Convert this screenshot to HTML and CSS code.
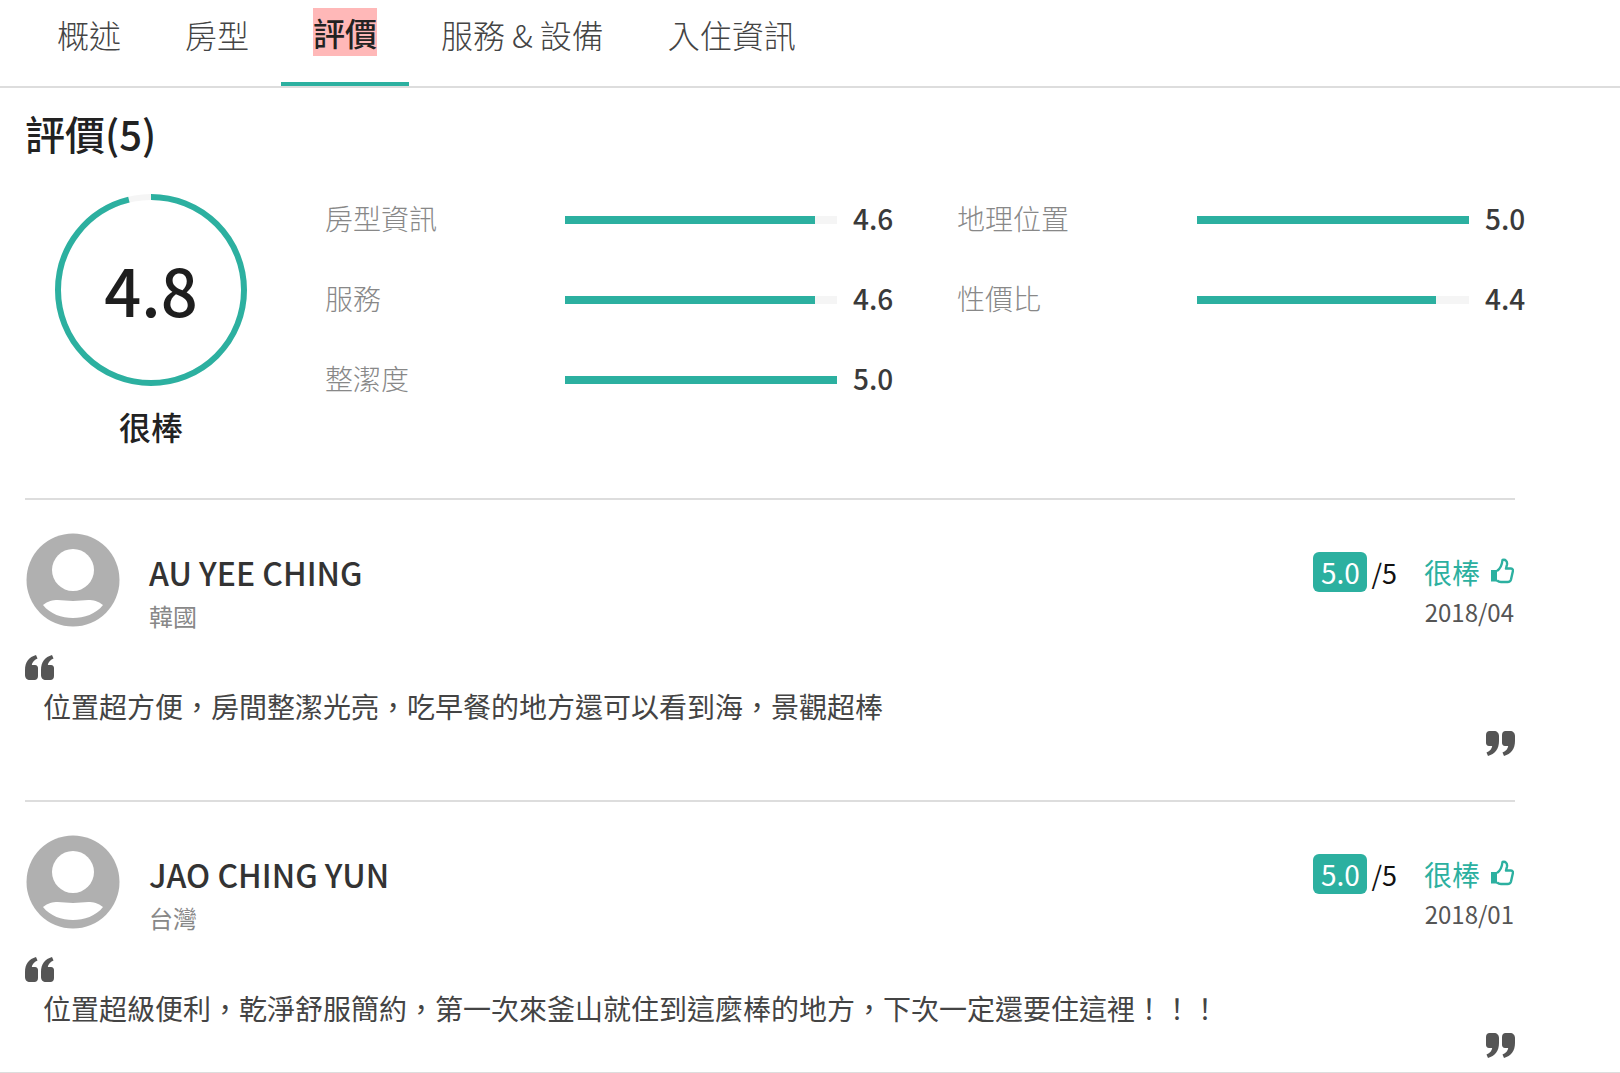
FILE: index.html

```html
<!DOCTYPE html>
<html lang="zh-Hant">
<head>
  <meta charset="UTF-8" />
  <meta name="viewport" content="width=device-width, initial-scale=1.0" />
  <title>評價</title>
  <link rel="stylesheet" href="styles.css">
</head>
<body>
  <svg class="defs" width="0" height="0">
    <symbol id="quote" viewBox="0 0 29 25">
      <path d="M5 25C2 25 0 23 0 20V15C0 7 4 2 11 0L12.500 3.500C9 5 7 7.500 6.800 10H10C12 10 13 11.500 13 13V21C13 23.500 11.500 25 9.500 25ZM21 25C18 25 16 23 16 20V15C16 7 20 2 27 0L28.500 3.500C25 5 23 7.500 22.800 10H26C28 10 29 11.500 29 13V21C29 23.500 27.500 25 25.500 25Z" />
    </symbol>
    <symbol id="thumb" viewBox="0 0 24 26">
      <path d="M7 13C10 11 12 7 12.500 2C15.500 1 17.500 3.500 17 6.500L16 10.500H21C22.800 10.500 23.200 12 22.800 13.500L21 21.500C20.500 23.500 19 24 17.500 24H11C9.500 24 8 23.300 7 22.500" fill="none" stroke="currentColor" stroke-width="2.400" stroke-linejoin="round" />
      <path d="M1 12H7V23.500H1Z" />
    </symbol>
    <symbol id="user" viewBox="0 0 94 94">
      <circle cx="47" cy="47" r="46.500" fill="#b0b0b0" />
      <circle cx="47" cy="37" r="21" fill="#fff" />
      <path d="M17 72C27 64 36 68 47 68C58 68 67 64 77 72C70 81 58 85 47 85C36 85 24 81 17 72Z" fill="#fff" />
    </symbol>
  </svg>

  <nav class="tabs">
    <a class="tab">概述</a>
    <a class="tab">房型</a>
    <a class="tab active"><span class="mark">評價</span></a>
    <a class="tab">服務 &amp; 設備</a>
    <a class="tab">入住資訊</a>
  </nav>

  <main class="content">
    <h2 class="title">評價(5)</h2>

    <section class="summary">
      <div class="overall">
        <div class="ring">
          <svg width="192" height="192" viewBox="0 0 192 192">
            <circle cx="96" cy="96" r="93" fill="none" stroke="#f5f5f5" stroke-width="6" />
            <circle cx="96" cy="96" r="93" fill="none" stroke="#2cb0a0" stroke-width="6" stroke-dasharray="561 584.300" transform="rotate(-90 96 96)" />
          </svg>
          <span class="ring-score">4.8</span>
        </div>
        <div class="ring-label">很棒</div>
      </div>

      <div class="scores">
        <div class="score-row">
          <span class="score-name">房型資訊</span>
          <span class="bar"><span class="fill" style="width: 92%"></span></span>
          <span class="score-val">4.6</span>
        </div>
        <div class="score-row">
          <span class="score-name">地理位置</span>
          <span class="bar"><span class="fill" style="width: 100%"></span></span>
          <span class="score-val">5.0</span>
        </div>
        <div class="score-row">
          <span class="score-name">服務</span>
          <span class="bar"><span class="fill" style="width: 92%"></span></span>
          <span class="score-val">4.6</span>
        </div>
        <div class="score-row">
          <span class="score-name">性價比</span>
          <span class="bar"><span class="fill" style="width: 88%"></span></span>
          <span class="score-val">4.4</span>
        </div>
        <div class="score-row">
          <span class="score-name">整潔度</span>
          <span class="bar"><span class="fill" style="width: 100%"></span></span>
          <span class="score-val">5.0</span>
        </div>
      </div>
    </section>

    <article class="review">
      <div class="review-head">
        <svg class="avatar" width="94" height="94"><use href="#user" /></svg>
        <div class="who">
          <div class="name">AU YEE CHING</div>
          <div class="country">韓國</div>
        </div>
        <div class="verdict">
          <div class="verdict-top">
            <span class="badge">5.0</span><span class="outof">/5</span>
            <span class="word">很棒</span>
            <svg class="thumb" width="24" height="26"><use href="#thumb" /></svg>
          </div>
          <div class="date">2018/04</div>
        </div>
      </div>
      <svg class="quote" width="29" height="25"><use href="#quote" /></svg>
      <p class="text">位置超方便，房間整潔光亮，吃早餐的地方還可以看到海，景觀超棒</p>
      <svg class="quote close" width="29" height="25"><use href="#quote" /></svg>
    </article>

    <article class="review">
      <div class="review-head">
        <svg class="avatar" width="94" height="94"><use href="#user" /></svg>
        <div class="who">
          <div class="name">JAO CHING YUN</div>
          <div class="country">台灣</div>
        </div>
        <div class="verdict">
          <div class="verdict-top">
            <span class="badge">5.0</span><span class="outof">/5</span>
            <span class="word">很棒</span>
            <svg class="thumb" width="24" height="26"><use href="#thumb" /></svg>
          </div>
          <div class="date">2018/01</div>
        </div>
      </div>
      <svg class="quote" width="29" height="25"><use href="#quote" /></svg>
      <p class="text">位置超級便利，乾淨舒服簡約，第一次來釜山就住到這麼棒的地方，下次一定還要住這裡！！！</p>
      <svg class="quote close" width="29" height="25"><use href="#quote" /></svg>
    </article>
  </main>
</body>
</html>
```

FILE: styles.css

```css
html, body {
  margin: 0;
  height: 1073px;
  overflow: hidden;
}
body {
  font-family: "Noto Sans CJK TC", "Noto Sans", sans-serif;
  background: white;
  color: #333;
  border-bottom: 1px solid #ddd;
  box-sizing: border-box;
}
.defs {
  display: block;
  height: 0;
}
.tabs {
  display: flex;
  height: 86px;
  padding-left: 25px;
  border-bottom: 2px solid #ddd;
}
.tab {
  display: flex;
  align-items: flex-start;
  height: 86px;
  box-sizing: border-box;
  padding: 6px 32px 0;
  font-size: 32px;
  font-weight: 300;
  line-height: 56px;
  color: #444;
}
.tab.active {
  border-bottom: 4px solid #2cb0a0;
}
.mark {
  display: block;
  height: 48px;
  margin-top: 2px;
  line-height: 48px;
  background: #ffb8b8;
  color: #222;
  font-weight: 500;
}
.content {
  width: 1490px;
  margin-left: 25px;
}
.title {
  margin: 17px 0 0;
  font-size: 40px;
  font-weight: 500;
  line-height: 56px;
  color: #222;
}
.summary {
  display: flex;
  height: 337px;
  border-bottom: 2px solid #ddd;
}
.overall {
  flex: none;
  width: 252px;
  padding: 33px 0 0 30px;
  box-sizing: border-box;
}
.ring {
  position: relative;
  width: 192px;
  height: 192px;
}
.ring svg {
  display: block;
}
.ring-score {
  position: absolute;
  inset: 0 0 3px;
  display: flex;
  align-items: center;
  justify-content: center;
  font-size: 65px;
  font-weight: 500;
  color: #1e1e1e;
}
.ring-label {
  width: 192px;
  margin-top: 18px;
  text-align: center;
  font-size: 32px;
  font-weight: 500;
  line-height: 44px;
  color: #222;
}
.scores {
  display: grid;
  grid-template-columns: 632px 1fr;
  grid-auto-rows: 80px;
  padding-top: 33px;
  margin-left: 48px;
  min-width: 0;
  flex: 1;
}
.score-row {
  display: flex;
  align-items: center;
  height: 48px;
}
.score-name {
  width: 240px;
  font-size: 28px;
  font-weight: 300;
  color: #888;
}
.bar {
  display: block;
  flex: none;
  width: 272px;
  height: 8px;
  margin-top: 4px;
  background: #f5f5f5;
}
.fill {
  display: block;
  height: 8px;
  background: #2cb0a0;
}
.score-val {
  margin-left: 16px;
  font-size: 28px;
  font-weight: 500;
  color: #3a3a3a;
}
.review {
  position: relative;
  height: 300px;
  border-bottom: 2px solid #ddd;
}
.review-head {
  display: flex;
  padding-top: 33px;
}
.avatar {
  display: block;
  margin-left: 1px;
}
.who {
  margin-left: 29px;
  padding-top: 16px;
}
.name {
  font-size: 32px;
  font-weight: 500;
  line-height: 46px;
  color: #333;
}
.country {
  margin-top: 3px;
  font-size: 24px;
  line-height: 36px;
  color: #888;
}
.verdict {
  margin-left: auto;
  text-align: right;
  padding-top: 19px;
}
.verdict-top {
  display: flex;
  align-items: center;
  justify-content: flex-end;
  height: 40px;
}
.badge {
  width: 54px;
  height: 40px;
  line-height: 40px;
  border-radius: 6px;
  background: #2cb0a0;
  color: white;
  font-size: 28px;
  text-align: center;
}
.outof {
  margin-left: 4px;
  font-size: 27px;
  color: #111;
}
.word {
  margin-left: 27px;
  font-size: 28px;
  color: #2cb0a0;
}
.thumb {
  margin-left: 10px;
  margin-right: 1px;
  margin-bottom: 3px;
  color: #2cb0a0;
  fill: #2cb0a0;
}
.date {
  margin-top: 1px;
  margin-right: 1px;
  font-size: 24px;
  line-height: 38px;
  color: #555;
}
.quote {
  display: block;
  margin-top: 21px;
  fill: #555;
}
.text {
  margin: 6px 0 0 18px;
  font-size: 28px;
  line-height: 40px;
  color: #444;
}
.quote.close {
  position: absolute;
  right: 0;
  top: 231px;
  margin: 0;
  transform: rotate(180deg);
}
```
